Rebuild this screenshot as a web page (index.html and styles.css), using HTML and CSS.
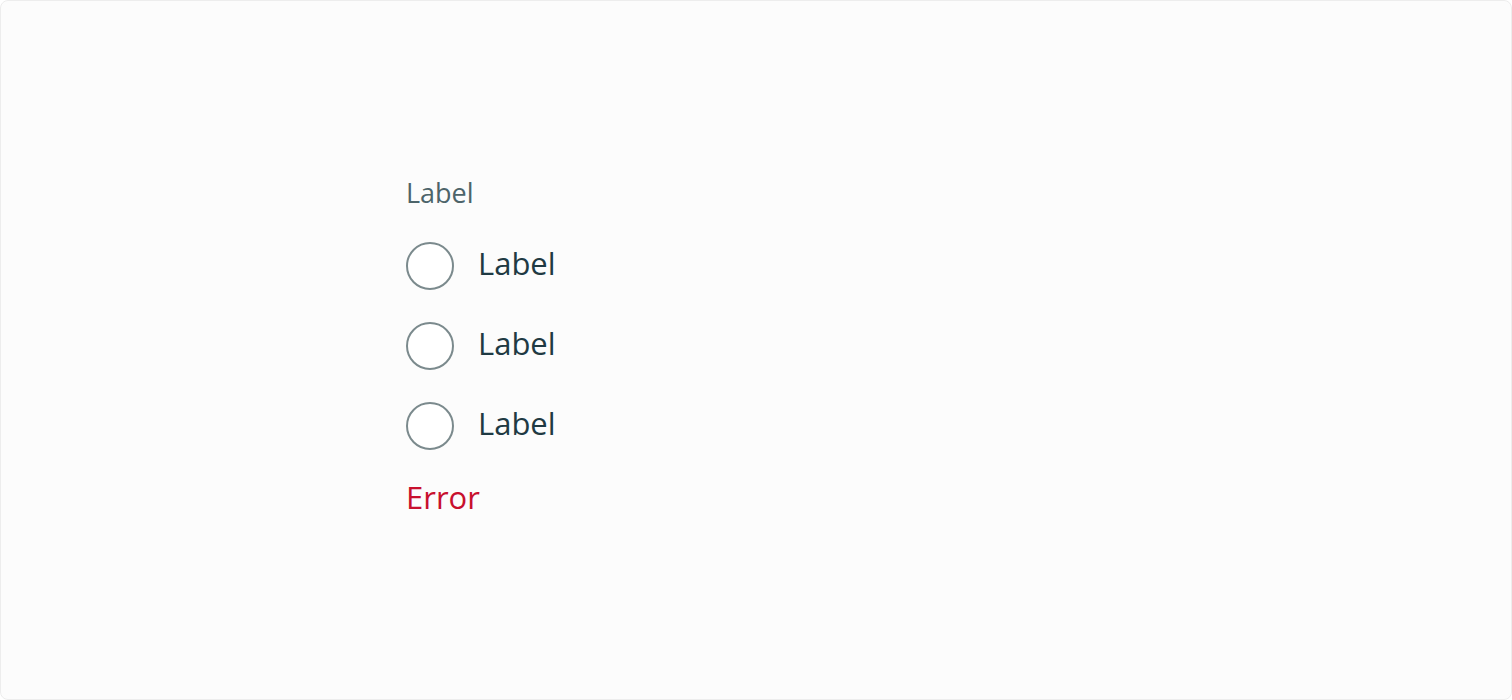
FILE: index.html
```html
<!DOCTYPE html>
<html lang="en">
<head>
<meta charset="utf-8">
<title>Radio group</title>
<link rel="stylesheet" href="styles.css">
</head>
<body>
<div class="frame">
  <fieldset class="group">
    <legend class="group-label">Label</legend>
    <div class="options">
      <label class="option"><span class="radio"></span><span class="option-text">Label</span></label>
      <label class="option"><span class="radio"></span><span class="option-text">Label</span></label>
      <label class="option"><span class="radio"></span><span class="option-text">Label</span></label>
    </div>
    <div class="error">Error</div>
  </fieldset>
</div>
</body>
</html>
```

FILE: styles.css
```css
* { box-sizing: border-box; }
html, body { margin: 0; padding: 0; }
body {
  width: 1512px;
  height: 700px;
  font-family: "Open Sans", Lato, sans-serif;
  background: #ffffff;
}
.frame {
  width: 1512px;
  height: 700px;
  border: 1px solid #ededed;
  border-radius: 8px;
  background: #fcfcfc;
  padding: 176px 0 0 405px;
}
.group {
  border: 0;
  margin: 0;
  padding: 0;
  display: flex;
  flex-direction: column;
}
.group-label {
  padding: 0;
  float: left;
  font-size: 27px;
  line-height: 32px;
  color: #4d646a;
  margin-bottom: 33px;
}
.options {
  clear: both;
  display: flex;
  flex-direction: column;
  gap: 32px;
}
.option {
  display: flex;
  align-items: center;
  gap: 24px;
  height: 48px;
}
.radio {
  width: 48px;
  height: 48px;
  border-radius: 50%;
  border: 2px solid #7b8a8d;
  background: #ffffff;
  flex: none;
}
.option-text {
  font-size: 31px;
  line-height: 36px;
  color: #1f3a43;
  margin-top: -7px;
}
.error {
  margin-top: 29px;
  font-size: 31px;
  line-height: 36px;
  color: #c8102e;
}
```
